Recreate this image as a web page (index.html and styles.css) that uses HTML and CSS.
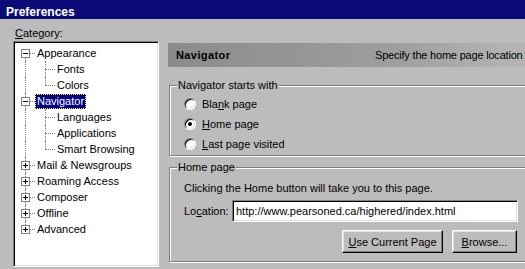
FILE: index.html
```html
<!DOCTYPE html>
<html lang="en">
<head>
  <meta charset="UTF-8">
  <title>Preferences</title>
  <link rel="stylesheet" href="styles.css">
</head>
<body>
  <div class="window">
    <div class="titlebar">Preferences</div>
    <div class="main">
      <!-- category tree -->
      <div class="sidebar">
        <div class="category"><u>C</u>ategory:</div>
        <div class="tree">
          <div class="row first"><span class="toggle open"></span><span class="stub"></span><span class="label">Appearance</span></div>
          <div class="row child"><span class="branch"></span><span class="label">Fonts</span></div>
          <div class="row child end"><span class="branch"></span><span class="label">Colors</span></div>
          <div class="row"><span class="toggle open"></span><span class="stub"></span><span class="label selected">Navigator</span></div>
          <div class="row child"><span class="branch"></span><span class="label">Languages</span></div>
          <div class="row child"><span class="branch"></span><span class="label">Applications</span></div>
          <div class="row child end"><span class="branch"></span><span class="label">Smart Browsing</span></div>
          <div class="row"><span class="toggle"></span><span class="stub"></span><span class="label">Mail &amp; Newsgroups</span></div>
          <div class="row"><span class="toggle"></span><span class="stub"></span><span class="label">Roaming Access</span></div>
          <div class="row"><span class="toggle"></span><span class="stub"></span><span class="label">Composer</span></div>
          <div class="row"><span class="toggle"></span><span class="stub"></span><span class="label">Offline</span></div>
          <div class="row last"><span class="toggle"></span><span class="stub"></span><span class="label">Advanced</span></div>
        </div>
      </div>

      <!-- settings panel -->
      <div class="content">
        <div class="band">
          <span class="band-title">Navigator</span>
          <span class="band-desc">Specify the home page location</span>
        </div>

        <fieldset class="group starts">
          <legend>Navigator starts with</legend>
          <label class="radio-row"><span class="radio"></span>Bla<u>n</u>k page</label>
          <label class="radio-row"><span class="radio checked"></span><u>H</u>ome page</label>
          <label class="radio-row"><span class="radio"></span><u>L</u>ast page visited</label>
        </fieldset>

        <fieldset class="group home">
          <legend>Home page</legend>
          <p class="hint">Clicking the Home button will take you to this page.</p>
          <div class="location-row">
            <span class="location-label">Lo<u>c</u>ation:</span>
            <input class="location" type="text" value="http://www.pearsoned.ca/highered/index.html" readonly>
          </div>
          <div class="button-row">
            <button class="btn btn-current"><u>U</u>se Current Page</button>
            <button class="btn btn-browse"><u>B</u>rowse...</button>
          </div>
        </fieldset>
      </div>
    </div>
  </div>
</body>
</html>
```

FILE: styles.css
```css
/* Preferences dialog, Win9x look */
body {
  margin: 0;
  width: 525px;
  height: 269px;
  overflow: hidden;
  background: #bcbcbc;
  color: #000;
  font-family: "Liberation Sans", Arial, sans-serif;
  font-size: 11px;
}

.window {
  display: flex;
  flex-direction: column;
}

.titlebar {
  height: 19px;
  box-sizing: border-box;
  padding: 5px 0 0 6px;
  line-height: 14px;
  font-size: 12px;
  font-weight: bold;
  color: #fff;
  background: #0b0b78;
}

.main {
  display: flex;
}

/* left column */
.sidebar {
  width: 159px;
  flex: none;
  box-sizing: border-box;
  padding-left: 13px;
}

.category {
  margin-top: 8px;
  padding-left: 2px;
  line-height: 13px;
}

.tree {
  margin-top: 1px;
  width: 146px;
  height: 226px;
  box-sizing: border-box;
  padding-top: 3px;
  background: #fff;
  border: 1px solid;
  border-color: #808080 #fff #fff #808080;
  box-shadow: inset 1px 1px #000, inset -1px -1px #dfdfdf;
}

.row {
  position: relative;
  display: flex;
  align-items: center;
  height: 16px;
  padding-left: 7px;
  white-space: nowrap;
}

/* trunk line through the top level */
.row::before {
  content: "";
  position: absolute;
  left: 11px;
  top: 0;
  bottom: 0;
  border-left: 1px dotted #808080;
}

.row.first::before {
  top: 8px;
}

.row.last::before {
  bottom: 8px;
}

.toggle {
  position: relative;
  z-index: 1;
  width: 9px;
  height: 9px;
  margin-top: 1px;
  box-sizing: border-box;
  border: 1px solid #808080;
  background: #fff;
}

.toggle::before {
  content: "";
  position: absolute;
  left: 1px;
  top: 3px;
  width: 5px;
  height: 1px;
  background: #000;
}

.toggle::after {
  content: "";
  position: absolute;
  left: 3px;
  top: 1px;
  width: 1px;
  height: 5px;
  background: #000;
}

.toggle.open::after {
  display: none;
}

.stub {
  width: 5px;
  align-self: flex-start;
  margin-top: 8px;
  border-top: 1px dotted #808080;
}

.row.child {
  padding-left: 31px;
}

.branch {
  position: relative;
  width: 10px;
  align-self: flex-start;
  margin-top: 8px;
  border-top: 1px dotted #808080;
}

.branch::before {
  content: "";
  position: absolute;
  left: 0;
  top: -9px;
  height: 16px;
  border-left: 1px dotted #808080;
}

.row.end .branch::before {
  height: 8px;
}

.label {
  display: inline-block;
  padding: 0 1px;
  line-height: 13px;
  border: 1px solid transparent;
}

.label.selected {
  background: #000080;
  color: #fff;
  border: 1px dotted #ffff40;
}

/* right column */
.content {
  flex: none;
  width: 380px;
  margin-left: 9px;
}

.band {
  display: flex;
  align-items: center;
  height: 24px;
  margin-top: 24px;
  padding-left: 8px;
  background: linear-gradient(to right, #8b8b8b, #9e9e9e 60%, #b4b4b4 90%);
}

.band-title {
  width: 199px;
  flex: none;
  font-weight: bold;
  letter-spacing: 0.4px;
}

.band-desc {
  white-space: nowrap;
  letter-spacing: -0.2px;
}

.group {
  width: 371px;
  min-width: 0;
  box-sizing: border-box;
  margin: 0 0 0 1px;
  padding: 0;
  border: 1px solid #808080;
  box-shadow: inset 1px 1px #fff, 1px 1px #fff;
}

.group legend {
  margin-left: 7px;
  padding: 0 1px;
  line-height: 13px;
  background: #bcbcbc;
}

.starts {
  margin-top: 12px;
  padding: 2px 0 1px;
}

.radio-row {
  display: flex;
  align-items: center;
  height: 20px;
  padding-left: 14px;
}

.radio {
  position: relative;
  width: 12px;
  height: 12px;
  margin-right: 6px;
  box-sizing: border-box;
  border-radius: 50%;
  background: #fff;
  border: 1px solid;
  border-color: #808080 #fff #fff #808080;
  box-shadow: inset 1px 1px #000, inset -1px -1px #dfdfdf;
}

.radio.checked::after {
  content: "";
  position: absolute;
  left: 3px;
  top: 3px;
  width: 4px;
  height: 4px;
  border-radius: 50%;
  background: #000;
}

.home {
  margin-top: 5px;
  padding-bottom: 8px;
}

.hint {
  margin: 0;
  padding: 6px 0 0 14px;
  line-height: 16px;
}

.location-row {
  display: flex;
  align-items: center;
  margin-top: 4px;
  padding-left: 14px;
}

.location-label {
  width: 48px;
}

.location {
  width: 286px;
  height: 22px;
  box-sizing: border-box;
  margin: 0;
  padding: 0 0 0 3px;
  font: inherit;
  color: #000;
  background: #fff;
  border: 1px solid;
  border-color: #808080 #fff #fff #808080;
  box-shadow: inset 1px 1px #000, inset -1px -1px #dfdfdf;
  outline: none;
}

.button-row {
  display: flex;
  gap: 9px;
  margin-top: 8px;
  padding-left: 172px;
}

.btn {
  height: 23px;
  padding: 0;
  font: inherit;
  color: #000;
  background: #bcbcbc;
  border: 1px solid;
  border-color: #fff #000 #000 #fff;
  box-shadow: inset -1px -1px #808080, inset 1px 1px #dfdfdf;
}

.btn-current {
  width: 101px;
}

.btn-browse {
  width: 65px;
}
```
